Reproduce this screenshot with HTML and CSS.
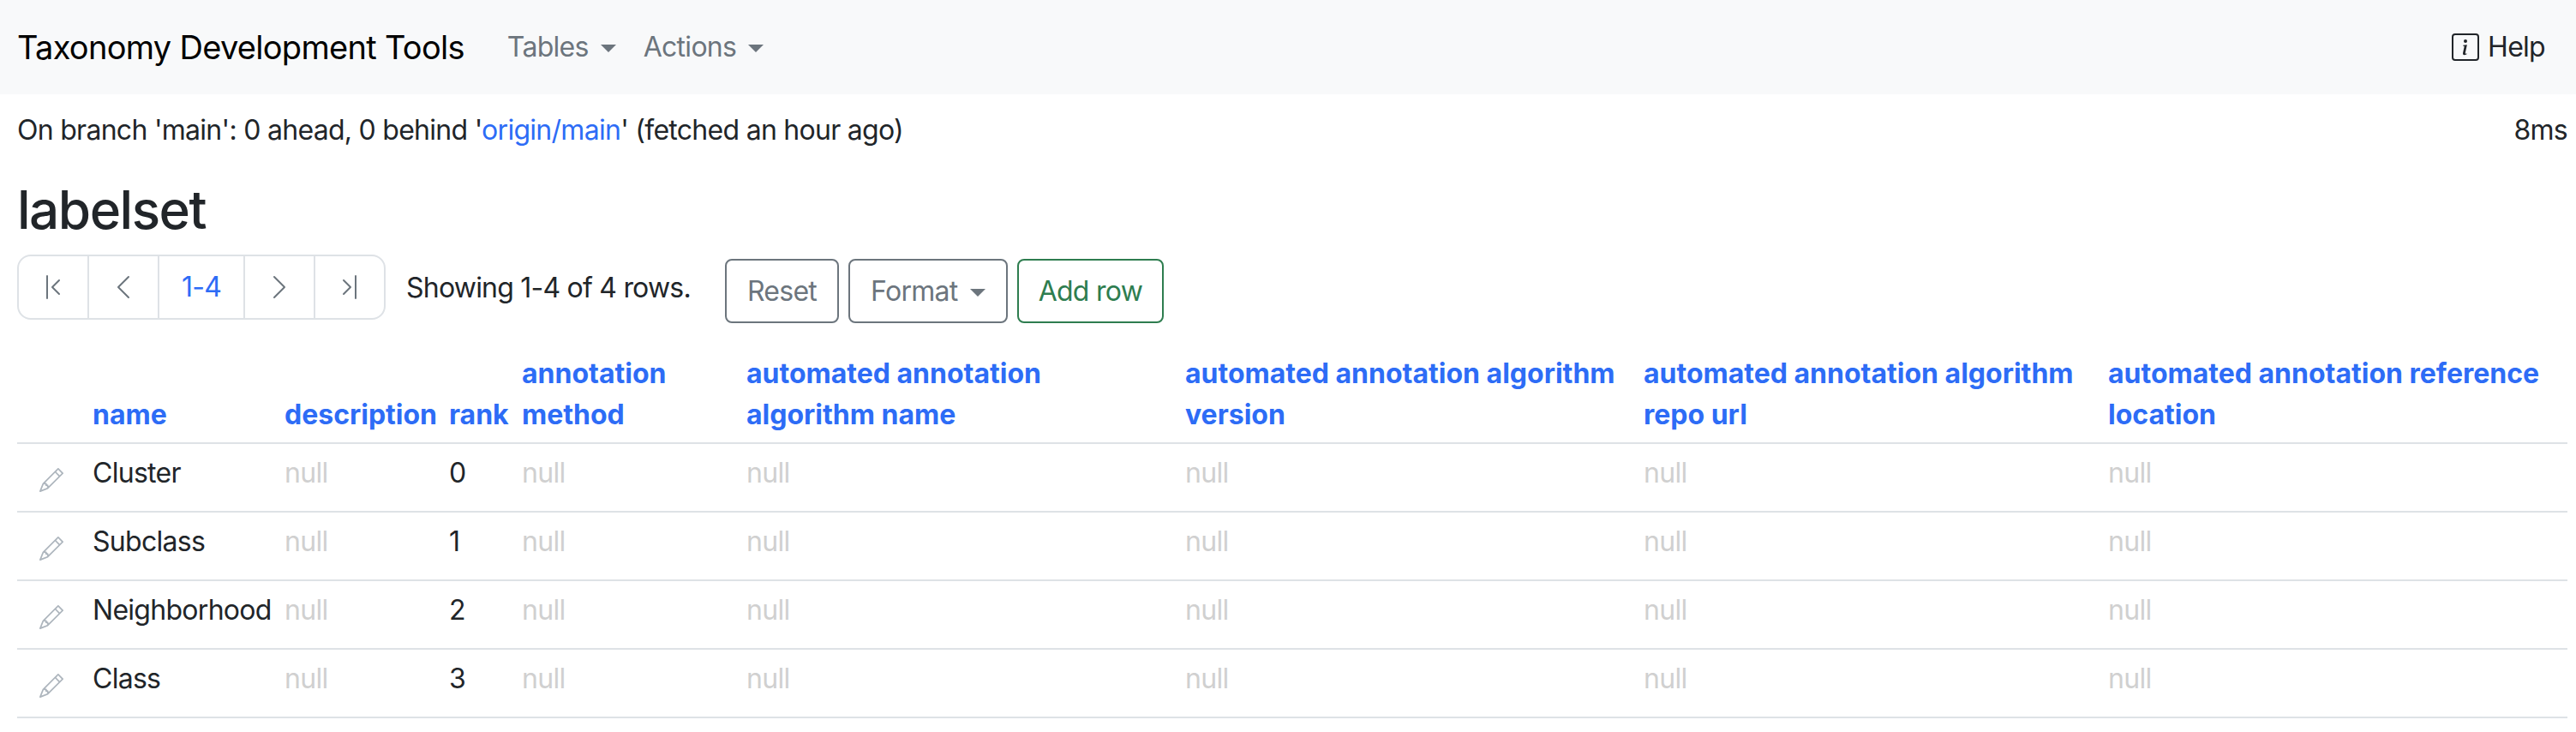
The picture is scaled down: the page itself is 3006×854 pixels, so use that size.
FILE: index.html
```html
<!DOCTYPE html>
<html lang="en">
<head>
  <meta charset="UTF-8" />
  <title>labelset</title>
  <link rel="stylesheet" href="styles.css">
</head>
<body>

  <nav class="navbar">
    <a class="brand" href="#">Taxonomy Development Tools</a>
    <a class="nav-link dropdown" href="#">Tables</a>
    <a class="nav-link dropdown" href="#">Actions</a>
    <a class="help" href="#">
      <svg class="icon" viewBox="0 0 16 16" fill="currentColor">
        <path d="M14 1a1 1 0 0 1 1 1v12a1 1 0 0 1-1 1H2a1 1 0 0 1-1-1V2a1 1 0 0 1 1-1h12zM2 0a2 2 0 0 0-2 2v12a2 2 0 0 0 2 2h12a2 2 0 0 0 2-2V2a2 2 0 0 0-2-2H2z"/>
        <path d="m8.93 6.588-2.29.287-.082.38.45.083c.294.07.352.176.288.469l-.738 3.468c-.194.897.105 1.319.808 1.319.545 0 1.178-.252 1.465-.598l.088-.416c-.2.176-.492.246-.686.246-.275 0-.375-.193-.304-.533L8.93 6.588zM9 4.5a1 1 0 1 1-2 0 1 1 0 0 1 2 0z"/>
      </svg>
      Help
    </a>
  </nav>

  <div class="container">
    <div class="status">
      <span>On branch 'main': 0 ahead, 0 behind '<a href="#">origin/main</a>' (fetched an hour ago)</span>
      <span>8ms</span>
    </div>

    <h1>labelset</h1>

    <div class="toolbar">
      <ul class="pagination">
        <li class="page-item">
          <svg class="icon" viewBox="0 0 16 16" fill="currentColor"><path d="M11.854 3.646a.5.5 0 0 1 0 .708L8.207 8l3.647 3.646a.5.5 0 0 1-.708.708l-4-4a.5.5 0 0 1 0-.708l4-4a.5.5 0 0 1 .708 0zM4.5 1a.5.5 0 0 0-.5.5v13a.5.5 0 0 0 1 0v-13a.5.5 0 0 0-.5-.5z"/></svg>
        </li>
        <li class="page-item">
          <svg class="icon" viewBox="0 0 16 16" fill="currentColor"><path d="M11.354 1.646a.5.5 0 0 1 0 .708L5.707 8l5.647 5.646a.5.5 0 0 1-.708.708l-6-6a.5.5 0 0 1 0-.708l6-6a.5.5 0 0 1 .708 0z"/></svg>
        </li>
        <li class="page-item current">1-4</li>
        <li class="page-item">
          <svg class="icon" viewBox="0 0 16 16" fill="currentColor"><path d="M4.646 1.646a.5.5 0 0 1 .708 0l6 6a.5.5 0 0 1 0 .708l-6 6a.5.5 0 0 1-.708-.708L10.293 8 4.646 2.354a.5.5 0 0 1 0-.708z"/></svg>
        </li>
        <li class="page-item">
          <svg class="icon" viewBox="0 0 16 16" fill="currentColor"><path d="M4.146 3.646a.5.5 0 0 0 0 .708L7.793 8l-3.647 3.646a.5.5 0 0 0 .708.708l4-4a.5.5 0 0 0 0-.708l-4-4a.5.5 0 0 0-.708 0zM11.5 1a.5.5 0 0 1 .5.5v13a.5.5 0 0 1-1 0v-13a.5.5 0 0 1 .5-.5z"/></svg>
        </li>
      </ul>
      <span class="row-count">Showing 1-4 of 4 rows.</span>
      <div class="buttons">
        <button class="btn">Reset</button>
        <button class="btn dropdown">Format</button>
        <button class="btn btn-add">Add row</button>
      </div>
    </div>

    <table>
      <colgroup>
        <col class="col-edit"><col class="col-name"><col class="col-desc"><col class="col-rank"><col class="col-method">
        <col class="col-algname"><col class="col-algver"><col class="col-repo"><col class="col-ref">
      </colgroup>
      <thead>
        <tr>
          <th></th>
          <th><a href="#">name</a></th>
          <th><a href="#">description</a></th>
          <th><a href="#">rank</a></th>
          <th><a href="#">annotation method</a></th>
          <th><a href="#">automated annotation algorithm name</a></th>
          <th><a href="#">automated annotation algorithm version</a></th>
          <th><a href="#">automated annotation algorithm repo url</a></th>
          <th><a href="#">automated annotation reference location</a></th>
        </tr>
      </thead>
      <tbody id="rows"></tbody>
    </table>
  </div>

<script>
  const names = ['Cluster', 'Subclass', 'Neighborhood', 'Class'];
  const pencil = '<svg class="pencil" viewBox="0 0 16 16" fill="currentColor"><path d="M12.146.146a.5.5 0 0 1 .708 0l3 3a.5.5 0 0 1 0 .708l-10 10a.5.5 0 0 1-.168.11l-5 2a.5.5 0 0 1-.65-.65l2-5a.5.5 0 0 1 .11-.168l10-10zM11.207 2.5 13.5 4.793 14.793 3.5 12.5 1.207 11.207 2.5zm1.586 3L10.5 3.207 4 9.707V10h.5a.5.5 0 0 1 .5.5v.5h.5a.5.5 0 0 1 .5.5v.5h.293l6.5-6.5zm-9.761 5.175-.106.106-1.528 3.821 3.821-1.528.106-.106A.5.5 0 0 1 5 12.5V12h-.5a.5.5 0 0 1-.5-.5V11h-.5a.5.5 0 0 1-.468-.325z"/></svg>';
  const nullCell = '<td class="null">null</td>';

  document.querySelector('#rows').innerHTML = names.map((name, rank) => `
    <tr>
      <td class="edit">${pencil}</td>
      <td>${name}</td>
      ${nullCell}
      <td>${rank}</td>
      ${nullCell.repeat(5)}
    </tr>`).join('');
</script>

</body>
</html>
```

FILE: styles.css
```css
body {
  margin: 0;
  font-family: Inter, "Liberation Sans", sans-serif;
  font-size: 32px;
  line-height: 48px;
  letter-spacing: -0.72px;
  color: #212529;
  background-color: #fff;
}

a {
  color: #2d6cf6;
  text-decoration: none;
}

.navbar {
  display: flex;
  align-items: center;
  height: 110px;
  padding: 0 20px;
  background-color: #f8f9fa;
}

.brand {
  color: #000;
  font-size: 38px;
  letter-spacing: -0.7px;
  margin-right: 34px;
}

.nav-link {
  color: #6c757d;
  padding: 0 16px;
}

.dropdown::after {
  content: "";
  display: inline-block;
  margin-left: 14px;
  vertical-align: 5px;
  border-top: 9px solid;
  border-left: 9px solid transparent;
  border-right: 9px solid transparent;
}

.help {
  display: flex;
  align-items: center;
  gap: 10px;
  margin-left: auto;
  margin-right: 16px;
  color: #212529;
}

.icon {
  width: 32px;
  height: 32px;
}

.container {
  padding: 18px 10px 0 20px;
}

.status {
  display: flex;
  justify-content: space-between;
}

h1 {
  margin: 30px 0 14px;
  font-size: 62px;
  line-height: 77px;
  font-weight: 500;
  letter-spacing: -1.5px;
}

.toolbar {
  display: flex;
  align-items: flex-start;
}

.pagination {
  display: flex;
  margin: 0;
  padding: 0;
  list-style: none;
  border: 2px solid #dee2e6;
  border-radius: 16px;
}

.page-item {
  display: flex;
  align-items: center;
  justify-content: center;
  width: 80px;
  height: 72px;
  color: #6c757d;
  border-left: 2px solid #dee2e6;
}

.page-item:first-child {
  border-left: 0;
}

.page-item.current {
  width: 98px;
  color: #2d6cf6;
}

.row-count {
  margin: 15px 0 0 24px;
  letter-spacing: -0.78px;
}

.buttons {
  display: flex;
  gap: 11px;
  margin: 5px 0 0 40px;
}

button {
  font: inherit;
  letter-spacing: inherit;
}

.btn {
  height: 75px;
  padding: 0 24px;
  color: #6c757d;
  background: transparent;
  border: 2px solid #6c757d;
  border-radius: 8px;
}

.btn-add {
  padding: 0 23px;
  color: #2e7d4f;
  border-color: #2e7d4f;
}

table {
  width: 100%;
  margin-top: 35px;
  border-collapse: collapse;
  table-layout: fixed;
}

.col-edit { width: 80px; }
.col-name { width: 224px; }
.col-desc { width: 192px; }
.col-rank { width: 85px; }
.col-method { width: 262px; }
.col-algname { width: 512px; }
.col-algver { width: 535px; }
.col-repo { width: 542px; }

th {
  padding: 0 8px 8px;
  text-align: left;
  vertical-align: bottom;
  font-weight: 700;
  letter-spacing: 0;
}

td {
  box-sizing: border-box;
  height: 80px;
  padding: 0 8px 10px;
  border-top: 2px solid #dee2e6;
  white-space: nowrap;
}

tbody tr:last-child td {
  border-bottom: 2px solid #dee2e6;
}

.null {
  color: #d0d0d0;
}

.edit {
  padding: 6px 0 0 26px;
}

.pencil {
  display: block;
  width: 28px;
  height: 28px;
  color: #adb5bd;
}
```
